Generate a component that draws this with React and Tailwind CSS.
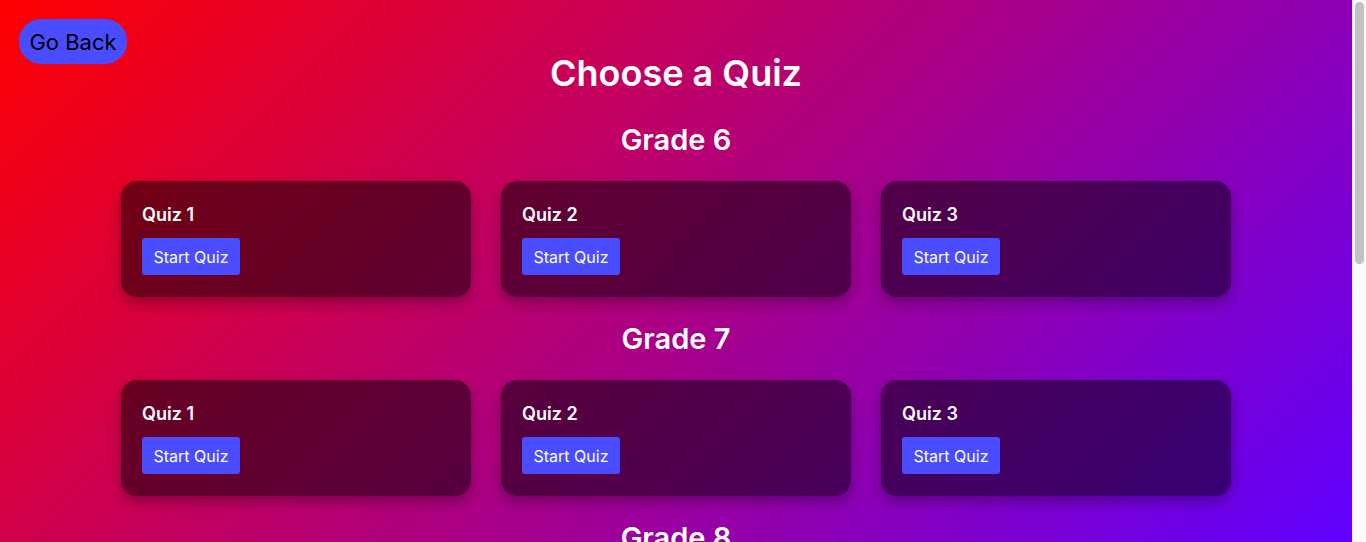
import React from "react";

const grades = ["Grade 6", "Grade 7", "Grade 8"];

export default function App() {
  return (
    <div
      className="flex h-screen overflow-hidden"
      style={{ fontFamily: "Inter, 'Noto Sans', sans-serif" }}
    >
      <main className="relative h-full flex-1 overflow-hidden bg-[linear-gradient(135deg,#ff0000,#5f00ff)] text-white">
        <button className="absolute top-[19px] left-[19px] h-[45px] w-[108px] rounded-[22px] bg-[#4a4cff] text-black text-[22px] leading-none">
          Go Back
        </button>
        <h1 className="pt-[50px] text-center text-[36px] font-semibold leading-[46px]">
          Choose a Quiz
        </h1>
        <div className="mt-[25px] flex flex-col gap-[23px]">
          {grades.map((g) => (
            <section key={g} className="flex flex-col items-center">
              <h2 className="text-[29px] font-semibold leading-[38px]">{g}</h2>
              <div className="mt-[22px] grid grid-cols-[350px_350px_350px] gap-[30px]">
                {[1, 2, 3].map((n) => (
                  <div
                    key={n}
                    className="h-[116px] rounded-[16px] bg-black/50 px-[21px] pt-[22px] shadow-[0_6px_14px_rgba(0,0,0,0.3)]"
                  >
                    <div className="text-[18px] font-semibold leading-[24px]">Quiz {n}</div>
                    <button className="mt-[11px] h-[37px] w-[98px] rounded-[3px] bg-[#4a4cff] text-[16px] text-white">
                      Start Quiz
                    </button>
                  </div>
                ))}
              </div>
            </section>
          ))}
        </div>
      </main>
      <aside className="flex w-[14px] shrink-0 flex-col border-l border-[#ececec] bg-[#f9f9f9] px-[2px] pt-[2px]">
        <div className="h-[262px] rounded-full bg-[#c1c1c1]" />
      </aside>
    </div>
  );
}
